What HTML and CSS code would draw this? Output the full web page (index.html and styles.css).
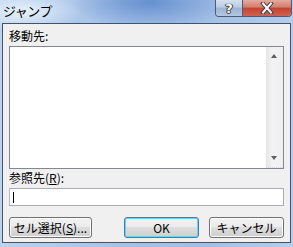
FILE: index.html
```html
<!DOCTYPE html>
<html lang="ja">
<head>
  <meta charset="UTF-8">
  <meta name="viewport" content="width=device-width, initial-scale=1.0">
  <title>ジャンプ</title>
  <link rel="stylesheet" href="styles.css">
</head>
<body>
  <div class="window">
    <div class="titlebar">
      <span class="title">ジャンプ</span>
      <div class="caption">
        <button class="cap help">?</button>
        <button class="cap close">
          <svg width="16" height="12" viewBox="0 0 16 12">
            <path d="M4 1.5 L12 10.5 M12 1.5 L4 10.5" stroke="#3d3d4a" stroke-width="4" stroke-linecap="square"/>
            <path d="M4 1.5 L12 10.5 M12 1.5 L4 10.5" stroke="#fff" stroke-width="2" stroke-linecap="square"/>
          </svg>
        </button>
      </div>
    </div>
    <div class="client">
      <div class="label">移動先:</div>
      <div class="listbox">
        <div class="items"></div>
        <div class="scrollbar">
          <div class="arrow up"></div>
          <div class="track"></div>
          <div class="arrow down"></div>
        </div>
      </div>
      <div class="label second">参照先(<u>R</u>):</div>
      <div class="textbox"><span class="caret"></span></div>
      <div class="buttons">
        <button class="btn wide">セル選択(<u>S</u>)...</button>
        <div class="spacer"></div>
        <button class="btn default">OK</button>
        <button class="btn">キャンセル</button>
      </div>
    </div>
  </div>
</body>
</html>
```
FILE: styles.css
```css
html, body {
  margin: 0;
  padding: 0;
  overflow: hidden;
}
body {
  font-family: "Noto Sans CJK JP", "Liberation Sans", sans-serif;
  font-size: 12px;
  color: #000;
}
.window {
  width: 293px;
  height: 247px;
  display: flex;
  flex-direction: column;
  background:
    radial-gradient(ellipse 80px 28px at 150px 2px, rgb(95 138 204 / .9), rgb(95 138 204 / 0)),
    radial-gradient(ellipse 60px 20px at 22px 11px, rgb(236 244 252 / .9), rgb(236 244 252 / 0)),
    linear-gradient(to right, #bcd3ee, #a6c2e7 40%, #a3bfe5 70%, #b6cdeb);
}
.titlebar {
  height: 23px;
  display: flex;
  justify-content: space-between;
  align-items: flex-start;
}
.title {
  padding: 3px 0 0 3px;
  font-size: 13px;
  line-height: 16px;
  letter-spacing: -.5px;
}
.caption {
  display: flex;
  margin-right: 1px;
  border: 1px solid #4a5b78;
  border-top: none;
  border-radius: 0 0 4px 4px;
  overflow: hidden;
}
.cap {
  height: 16px;
  padding: 0;
  border: none;
  display: flex;
  align-items: center;
  justify-content: center;
}
.help {
  width: 27px;
  border-right: 1px solid #4a5b78;
  background: linear-gradient(#d4e0ef, #b9cbe2 45%, #9db4d3 50%, #b3c7e2);
  color: #fff;
  font: bold 13px "DejaVu Sans", sans-serif;
  text-shadow: 0 0 1px #333, 0 0 1px #333, 1px 0 0 #444, -1px 0 0 #444, 0 1px 0 #444;
}
.close {
  width: 48px;
  background: linear-gradient(#e4a99e, #d57c6c 45%, #c4432f 50%, #d0634e);
}
.client {
  flex: 1;
  margin: 0 2px 4px 2px;
  border: 1px solid #3f526f;
  background: #f0f0f0;
  padding: 5px 6px 4px 6px;
  display: flex;
  flex-direction: column;
}
.label {
  line-height: 14px;
  height: 14px;
}
.label.second {
  margin-top: 2px;
}
u {
  text-decoration-thickness: 1px;
  text-underline-offset: 1px;
}
.listbox {
  margin-top: 3px;
  height: 123px;
  box-sizing: border-box;
  border: 1px solid #828790;
  background: #fff;
  display: flex;
}
.items {
  flex: 1;
}
.scrollbar {
  width: 17px;
  display: flex;
  flex-direction: column;
  background: linear-gradient(to right, #e6e6e6, #f2f2f2 40%, #f0f0f0);
}
.track {
  flex: 1;
}
.arrow {
  height: 17px;
  position: relative;
}
.arrow::after {
  content: "";
  position: absolute;
  left: 5px;
  width: 0;
  height: 0;
  border-left: 3.5px solid transparent;
  border-right: 3.5px solid transparent;
}
.arrow.up::after {
  top: 7px;
  border-bottom: 4px solid #5e5e5e;
}
.arrow.down::after {
  top: 6px;
  border-top: 4px solid #5e5e5e;
}
.arrow.down {
  border-bottom: 1px dotted #d8d8d8;
}
.textbox {
  margin-top: 3px;
  height: 18px;
  box-sizing: border-box;
  border: 1px solid #abadb3;
  border-left-color: #b8bac2;
  background: #fff;
  display: flex;
  align-items: center;
  padding-left: 3px;
}
.caret {
  width: 1px;
  height: 11px;
  background: #000;
}
.buttons {
  margin-top: 11px;
  display: flex;
  gap: 10px;
}
.spacer {
  flex: 1;
}
.btn {
  width: 75px;
  height: 21px;
  padding: 0;
  font: 12px "Noto Sans CJK JP", "Liberation Sans", sans-serif;
  line-height: 14px;
  border: 1px solid #707070;
  border-radius: 3px;
  background: linear-gradient(#f2f2f2, #ebebeb 45%, #dddddd 50%, #cfcfcf);
  box-shadow: inset 0 0 0 1px #fcfcfc;
  color: #000;
}
.btn.wide {
  width: 83px;
}
.btn.default {
  border-color: #3c7fb1;
  box-shadow: inset 0 0 0 1px #6fd0f4;
}
```
